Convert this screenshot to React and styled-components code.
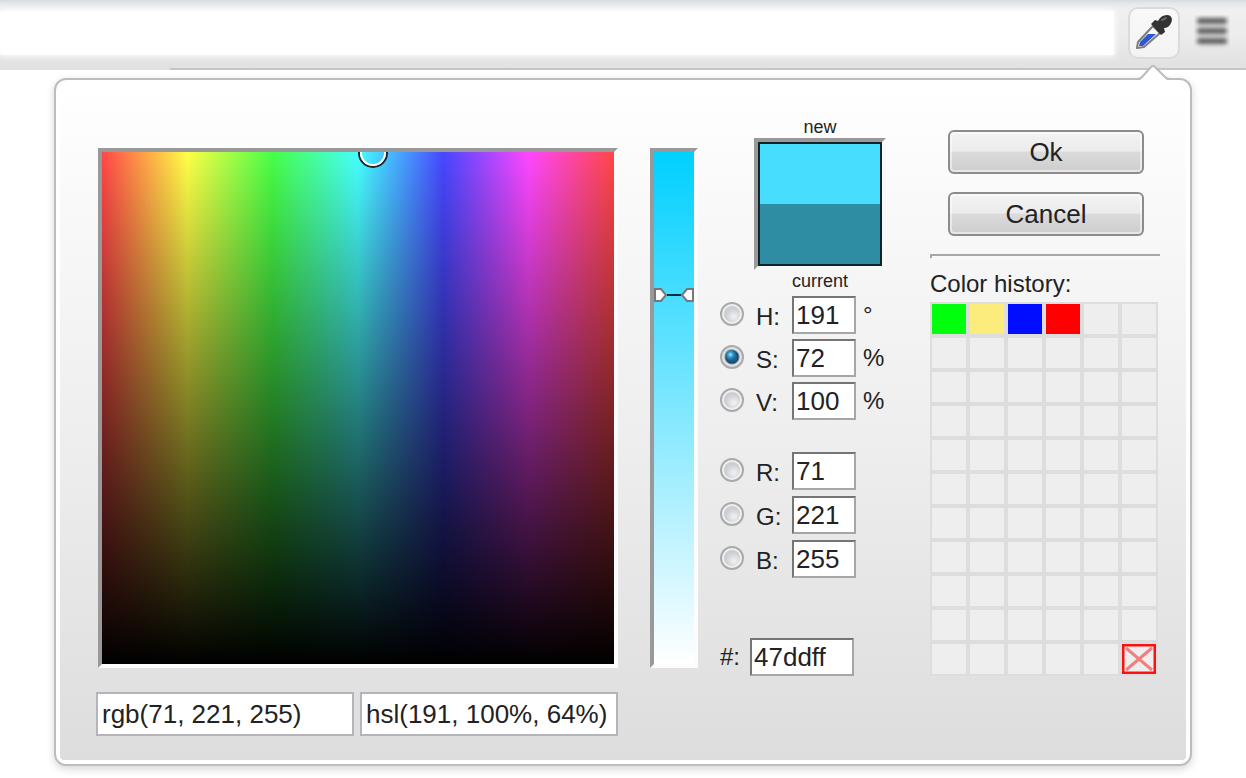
import React, { useState } from "react";
import styled, { createGlobalStyle, css } from "styled-components";

const GlobalStyle = createGlobalStyle`
  *, *::before, *::after { box-sizing: border-box; }
  body {
    margin: 0;
    background: #fff;
    color: #222;
    font-family: "Liberation Sans", Arial, sans-serif;
  }
  button, input { font: inherit; color: inherit; }
`;

const Toolbar = styled.header`
  position: relative;
  display: flex;
  align-items: center;
  height: 70px;
  padding: 0 16px 4px 0;
  background: linear-gradient(#d6dbe2 0, #e6e8eb 4px, #f0f0f0 10px, #ececec 36px, #e0e0e0 100%);
  &::after {
    content: "";
    position: absolute;
    left: 170px;
    right: 0;
    bottom: 0;
    height: 2px;
    background: #c4c4ca;
  }
`;

const Address = styled.input`
  flex: 1;
  min-width: 0;
  height: 44px;
  margin: 0 14px 0 0;
  padding: 0 12px;
  border: 0;
  outline: 0;
  border-radius: 2px;
  background: #fff;
  box-shadow: 0 0 6px 1px #fff;
`;

const ToolButton = styled.button`
  display: flex;
  align-items: center;
  justify-content: center;
  width: 52px;
  height: 52px;
  padding: 0;
  border: 2px solid #dbdbdb;
  border-radius: 10px;
  background: linear-gradient(#f9f9f9, #f3f3f3);
`;

const MenuButton = styled.button`
  display: flex;
  width: 36px;
  height: 36px;
  margin-left: 14px;
  padding: 0;
  border: 0;
  background: none;
`;

const Popup = styled.main`
  position: relative;
  margin: 8px 54px 12px;
  padding: 4px;
  border: 2px solid #bdbdbd;
  border-radius: 12px;
  background: #fff;
  box-shadow: 0 3px 8px rgba(0, 0, 0, 0.16);
`;

const Caret = styled.svg`
  position: absolute;
  right: 18px;
  top: -16px;
  display: block;
`;

const Picker = styled.form`
  display: grid;
  grid-template-columns: minmax(300px, 1fr) 80px 188px 274px;
  align-items: start;
  padding: 0 26px 24px 36px;
  border-radius: 4px;
  background: linear-gradient(#fff, #fbfbfb 12%, #ececec 58%, #dddddd);
`;

const MapColumn = styled.div`
  padding-top: 64px;
`;

const inset = css`
  border: 4px solid;
  border-color: #999 #fcfcfc #fcfcfc #999;
`;

const ColorMap = styled.div`
  ${inset}
  position: relative;
  overflow: hidden;
  height: 520px;
  margin-left: 2px;
  background:
    linear-gradient(rgba(0, 0, 0, 0), #000),
    linear-gradient(90deg, #ff4747, #ffff47, #47ff47, #47ffff, #4747ff, #ff47ff, #ff4747);
  background-origin: padding-box;
  background-clip: padding-box;
`;

const MapMarker = styled.svg`
  position: absolute;
  left: 53%;
  top: 1px;
  width: 32px;
  height: 32px;
  margin: -16px 0 0 -16px;
`;

const Strings = styled.div`
  display: flex;
  gap: 6px;
  margin-top: 24px;
`;

const StringInput = styled.input`
  flex: 1;
  min-width: 0;
  height: 44px;
  padding: 0 4px;
  border: 2px solid #b4b4ba;
  background: #fff;
  font-size: 26px;
  outline: 0;
`;

const SliderColumn = styled.div`
  padding: 64px 0 0 32px;
`;

const Track = styled.div`
  ${inset}
  position: relative;
  height: 520px;
  background: linear-gradient(#00d0ff, #fff) padding-box;
`;

const TrackMarker = styled.svg`
  position: absolute;
  left: 0;
  width: 40px;
  height: 14px;
  margin-top: -7px;
`;

const Range = styled.input`
  position: absolute;
  inset: 0;
  width: 100%;
  height: 100%;
  margin: 0;
  opacity: 0;
  writing-mode: vertical-lr;
  direction: rtl;
`;

const Fields = styled.div`
  padding: 32px 0 0 22px;
`;

const Preview = styled.div`
  width: 132px;
  margin: 0 0 4px 34px;
  font-size: 18px;
  line-height: 22px;
  text-align: center;
`;

const Swatches = styled.div`
  ${inset}
  border-color: #999 #f8f8f8 #f8f8f8 #999;
  height: 132px;
  outline: 2px solid #132328;
  outline-offset: -6px;
  background: linear-gradient(#47ddff 50%, #2e8ca3 50%) padding-box;
`;

const Group = styled.div`
  display: grid;
  gap: ${(p) => p.$gap}px;
  margin-bottom: ${(p) => p.$after}px;
`;

const Row = styled.div`
  display: grid;
  grid-template-columns: ${(p) => (p.$hex ? "30px 104px" : "36px 36px 64px 1fr")};
  align-items: center;
  height: 38px;
`;

const Radio = styled.input`
  appearance: none;
  width: 24px;
  height: 24px;
  margin: 0 0 2px;
  border: 2px solid #a9a9a9;
  border-radius: 50%;
  background:
    radial-gradient(circle at 60% 64%, #f2f3f4 0, rgba(226, 229, 231, 0) 8px),
    radial-gradient(circle, #cdd1d5 6px, #c6c9cc 7px, #f4f4f4 9px);
  &:checked {
    background:
      radial-gradient(circle at 42% 38%, #a8e4f6 0, #2c8fc0 3px, rgba(20, 80, 122, 0) 6px),
      radial-gradient(circle, #14608f 5px, #173a52 6px, #e0e2e3 8px);
  }
`;

const Label = styled.label`
  font-size: 24px;
  line-height: 28px;
  padding-top: ${(p) => (p.$low ? 4 : 0)}px;
`;

const Value = styled.input`
  width: 100%;
  height: 38px;
  padding: 0 2px;
  border: 2px solid;
  border-color: #757575 #a6a6a6 #a6a6a6 #757575;
  background: #fff;
  font-size: 26px;
  outline: 0;
`;

const Unit = styled.span`
  padding-left: 7px;
  font-size: 24px;
  line-height: 28px;
`;

const Side = styled.aside`
  padding: 46px 0 0 44px;
`;

const Actions = styled.div`
  display: grid;
  gap: 18px;
  padding: 0 16px 0 18px;
`;

const Action = styled.button`
  height: 44px;
  padding: 0;
  border: 2px solid #8c8c8c;
  border-radius: 6px;
  box-shadow: inset 0 0 0 2px rgba(255, 255, 255, 0.5);
  background: linear-gradient(#f3f3f3, #ebebeb 48%, #dbdbdb 50%, #cdcdcd);
  font-size: 26px;
`;

const Rule = styled.hr`
  height: 4px;
  margin: 18px 0 12px;
  border: solid;
  border-width: 2px 0 0 2px;
  border-color: #a6a6a6;
  background: #f8f8f8;
`;

const HistoryTitle = styled.h2`
  margin: 0 0 4px;
  font-size: 24px;
  line-height: 28px;
  font-weight: 400;
`;

const History = styled.div`
  display: grid;
  grid-template-columns: repeat(6, 38px);
  grid-auto-rows: 34px;
`;

const Cell = styled.button`
  display: flex;
  padding: 0;
  border: 2px solid #dddddd;
  background: ${(p) => p.$color || "#eeeeee"};
`;

const COLORS = ["#00ff0d", "#fcec7c", "#000dff", "#ff0000"];

const HSV = [
  ["H", "191", "°"],
  ["S", "72", "%"],
  ["V", "100", "%"],
];
const RGB = [
  ["R", "71"],
  ["G", "221"],
  ["B", "255"],
];

function Channel({ name, value, unit }) {
  return (
    <Row>
      <Radio
        type="radio"
        name="channel"
        id={`mode-${name}`}
        defaultChecked={name === "S"}
        aria-label={`Pick by ${name}`}
      />
      <Label htmlFor={`value-${name}`} $low>
        {name}:
      </Label>
      <Value id={`value-${name}`} defaultValue={value} />
      {unit && <Unit>{unit}</Unit>}
    </Row>
  );
}

function Eyedropper() {
  return (
    <svg width="40" height="40" viewBox="0 0 40 40" aria-hidden="true">
      <defs>
        <filter id="soft" x="-20%" y="-20%" width="140%" height="140%">
          <feGaussianBlur stdDeviation="0.7" />
        </filter>
      </defs>
      <g filter="url(#soft)">
        <path d="M3 35 L4 29 L19 13 L26 20 L10 34 Z" fill="#f6f7fb" stroke="#7c7c80" strokeWidth="2" strokeLinejoin="round" />
        <path d="M5 33 L6 29 L14 21 L22 21 L9 33 Z" fill="#2f55d4" />
        <path d="M17 11 L21 7 L24 8 C26 4 29 2 33 2 C38 2 39 7 37 10 C36 13 33 15 30 15 L31 19 L27 22 Z" fill="#303030" />
        <path d="M28 7 L32 5" stroke="#666" strokeWidth="2" strokeLinecap="round" />
      </g>
    </svg>
  );
}

export default function App() {
  const [saturation, setSaturation] = useState(72);
  return (
    <>
      <GlobalStyle />
      <Toolbar>
        <Address aria-label="Address" />
        <ToolButton type="button" aria-label="Color picker">
          <Eyedropper />
        </ToolButton>
        <MenuButton type="button" aria-label="Menu">
          <svg width="36" height="36" viewBox="0 0 36 36" aria-hidden="true">
            <defs>
              <filter id="haze" x="-20%" y="-30%" width="140%" height="160%">
                <feGaussianBlur stdDeviation="2" />
              </filter>
            </defs>
            <g filter="url(#haze)" fill="#5c5c5c">
              <rect x="3" y="3" width="30" height="6" rx="2" />
              <rect x="3" y="13" width="30" height="6" rx="2" />
              <rect x="3" y="23" width="30" height="6" rx="2" />
            </g>
          </svg>
        </MenuButton>
      </Toolbar>
      <Popup>
        <Caret width="38" height="17" viewBox="0 0 38 17" aria-hidden="true">
          <path d="M5 17 L7 15 L17 4 Q19 2 21 4 L32 15 L34 17 Z" fill="#fff" />
          <path d="M3 15 Q6 15 8 13 L17 3 Q19 1 21 3 L31 13 Q33 15 36 15" fill="none" stroke="#bdbdbd" strokeWidth="2" />
        </Caret>
        <Picker onSubmit={(e) => e.preventDefault()}>
          <MapColumn>
            <ColorMap>
              <MapMarker viewBox="0 0 32 32" aria-hidden="true">
                <circle cx="16" cy="16" r="14" fill="none" stroke="#222" strokeWidth="2" />
                <circle cx="16" cy="16" r="12" fill="none" stroke="#fff" strokeWidth="2" />
              </MapMarker>
            </ColorMap>
            <Strings>
              <StringInput aria-label="RGB string" defaultValue="rgb(71, 221, 255)" />
              <StringInput aria-label="HSL string" defaultValue="hsl(191, 100%, 64%)" />
            </Strings>
          </MapColumn>
          <SliderColumn>
            <Track>
              <TrackMarker viewBox="0 0 40 14" aria-hidden="true" style={{ top: `${100 - saturation}%` }}>
                <path d="M13 7 H27" stroke="#06323e" strokeWidth="2" />
                <path d="M1 1 H7 L12 7 L7 13 H1 Z" fill="#fff" stroke="#777" strokeWidth="2" />
                <path d="M39 1 H33 L28 7 L33 13 H39 Z" fill="#fff" stroke="#777" strokeWidth="2" />
              </TrackMarker>
              <Range
                type="range"
                min="0"
                max="100"
                value={saturation}
                onChange={(e) => setSaturation(Number(e.target.value))}
                aria-label="Saturation"
              />
            </Track>
          </SliderColumn>
          <Fields>
            <Preview>
              <div>new</div>
              <Swatches />
              <div>current</div>
            </Preview>
            <Group $gap={5} $after={32}>
              {HSV.map(([name, value, unit]) => (
                <Channel key={name} name={name} value={value} unit={unit} />
              ))}
            </Group>
            <Group $gap={6} $after={60}>
              {RGB.map(([name, value]) => (
                <Channel key={name} name={name} value={value} />
              ))}
            </Group>
            <Row $hex>
              <Label htmlFor="hex">#:</Label>
              <Value id="hex" defaultValue="47ddff" />
            </Row>
          </Fields>
          <Side>
            <Actions>
              <Action type="submit">Ok</Action>
              <Action type="button">Cancel</Action>
            </Actions>
            <Rule />
            <HistoryTitle>Color history:</HistoryTitle>
            <History>
              {Array.from({ length: 65 }, (_, i) => (
                <Cell key={i} type="button" $color={COLORS[i]} aria-label={COLORS[i] || "Empty slot"} />
              ))}
              <Cell type="button" aria-label="Clear history">
                <svg width="34" height="30" viewBox="0 0 34 30" aria-hidden="true">
                  <path d="M4 4 L30 26 M30 4 L4 26" stroke="#f08080" strokeWidth="3" />
                  <rect x="1" y="1" width="32" height="28" fill="none" stroke="#ff1010" strokeWidth="3" />
                </svg>
              </Cell>
            </History>
          </Side>
        </Picker>
      </Popup>
    </>
  );
}
